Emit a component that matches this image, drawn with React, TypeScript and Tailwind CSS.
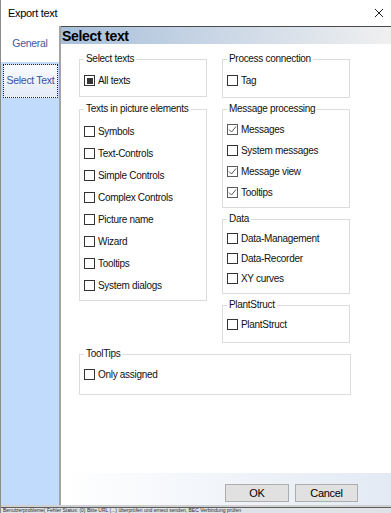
import type { ReactNode } from 'react'

type Item = { label: string; checked?: boolean; mixed?: boolean }

function Box({ checked, mixed }: { checked?: boolean; mixed?: boolean }) {
  return (
    <span
      className={`w-[11px] h-[11px] shrink-0 border bg-white flex items-center justify-center ${
        checked ? 'border-[#5c5c5c]' : 'border-[#333333]'
      }`}
    >
      {mixed && <span className="w-[6px] h-[6px] bg-[#333333]" />}
      {checked && (
        <svg width="9" height="9" viewBox="0 0 9 9">
          <polyline points="1,4.5 3.5,7 8,1.5" fill="none" stroke="#555" strokeWidth="1" />
        </svg>
      )}
    </span>
  )
}

function Group({
  title,
  items,
  rowH,
  pt,
  h,
  w,
}: {
  title: string
  items: Item[]
  rowH: string
  pt: string
  h: string
  w?: string
}) {
  return (
    <fieldset className={`border border-[#dcdcdc] px-[4px] ${h} ${w ?? 'w-[128px]'}`}>
      <legend className="ml-0 px-[2px] leading-[12px]">{title}</legend>
      <div className={`flex flex-col ${pt}`}>
        {items.map((it) => (
          <div key={it.label} className={`flex items-center gap-[3px] ${rowH}`}>
            <Box checked={it.checked} mixed={it.mixed} />
            <span>{it.label}</span>
          </div>
        ))}
      </div>
    </fieldset>
  )
}

function Btn({ children, w }: { children: ReactNode; w: string }) {
  return (
    <button className={`${w} h-[18px] bg-[#e1e1e1] border border-[#adadad] text-[11px] leading-none text-black`}>
      {children}
    </button>
  )
}

export default function App() {
  return (
    <div className="w-[391px] h-[513px] flex flex-col bg-white border-l border-[#8c8c8c] overflow-hidden text-[10px] tracking-[-0.3px] text-[#111] font-['Liberation_Sans',Arial,sans-serif]">
      {/* title bar */}
      <div className="h-[26px] shrink-0 flex items-center justify-between pl-[7px] pr-[7px]">
        <span className="text-[11px] text-black">Export text</span>
        <svg width="10" height="10" viewBox="0 0 10 10">
          <path d="M1 1 L9 9 M9 1 L1 9" stroke="#222" strokeWidth="1" />
        </svg>
      </div>

      <div className="flex-1 flex min-h-0">
        {/* tab strip */}
        <div className="w-[58px] shrink-0 flex flex-col bg-[#c0dbfb]">
          <div className="h-[36px] bg-white flex items-center justify-center text-[#3d5d98] text-[10.5px]">
            General
          </div>
          <div className="h-[2px]" />
          <div className="h-[34px] ml-[2px] mr-px border border-dotted border-[#222] bg-gradient-to-b from-[#f9fbfe] to-[#e3ebf7] flex items-center justify-center text-[#33549a] text-[10.5px]">
            Select Text
          </div>
        </div>
        <div className="w-[2px] shrink-0 bg-[#a3a3a3]" />

        {/* page */}
        <div className="flex-1 flex flex-col min-w-0">
          <div className="h-[18px] shrink-0 border-t border-[#4a4a4a] bg-gradient-to-r from-[#a8bfdb] to-[#f0f0f0] flex items-center pl-px">
            <span className="text-[14px] font-bold text-black leading-none">Select text</span>
          </div>

          <div className="flex-1 pt-[9px] pl-[18px]">
            <div className="flex gap-x-[15px] items-start">
              <div className="flex flex-col gap-[6px]">
                <Group title="Select texts" items={[{ label: 'All texts', mixed: true }]} rowH="h-[21px]" pt="pt-[5px]" h="h-[44px]" />
                <Group
                  title="Texts in picture elements"
                  items={[
                    { label: 'Symbols' },
                    { label: 'Text-Controls' },
                    { label: 'Simple Controls' },
                    { label: 'Complex Controls' },
                    { label: 'Picture name' },
                    { label: 'Wizard' },
                    { label: 'Tooltips' },
                    { label: 'System dialogs' },
                  ]}
                  rowH="h-[22px]"
                  pt="pt-[5px]"
                  h="h-[198px]"
                />
              </div>
              <div className="flex flex-col gap-[5px]">
                <Group title="Process connection" items={[{ label: 'Tag' }]} rowH="h-[21px]" pt="pt-[5px]" h="h-[45px]" />
                <Group
                  title="Message processing"
                  items={[
                    { label: 'Messages', checked: true },
                    { label: 'System messages' },
                    { label: 'Message view', checked: true },
                    { label: 'Tooltips', checked: true },
                  ]}
                  rowH="h-[21px]"
                  pt="pt-[4px]"
                  h="h-[105px]"
                />
                <Group
                  title="Data"
                  items={[{ label: 'Data-Management' }, { label: 'Data-Recorder' }, { label: 'XY curves' }]}
                  rowH="h-[20px]"
                  pt="pt-[3px]"
                  h="h-[81px]"
                />
                <Group title="PlantStruct" items={[{ label: 'PlantStruct' }]} rowH="h-[21px]" pt="pt-[3px]" h="h-[44px]" />
              </div>
            </div>
            <div className="mt-[5px]">
              <Group title="ToolTips" items={[{ label: 'Only assigned' }]} rowH="h-[21px]" pt="pt-[4px]" h="h-[47px]" w="w-[272px]" />
            </div>
          </div>

          <div className="h-[32px] shrink-0 bg-gradient-to-r from-white to-[#e3eaf4] flex items-start justify-end pt-[11px] pr-[33px] gap-[6px]">
            <Btn w="w-[64px]">OK</Btn>
            <Btn w="w-[63px]">Cancel</Btn>
          </div>
        </div>
      </div>

      {/* desktop behind the dialog */}
      <div className="h-[8px] shrink-0 flex flex-col bg-[#dfe3e8]">
        <div className="h-[2px] bg-[#d0d0d0]" />
        <div className="h-px bg-[#5e5e5e]" />
        <div className="flex-1 flex items-center overflow-hidden">
          <span className="text-[5px] leading-[5px] tracking-normal text-[#2a2a2a] whitespace-nowrap pl-[2px]">
            Benutzerprobleme( Fehler Status: (0) Bitte URL (...) überprüfen und erneut senden, BEC Verbindung prüfen
          </span>
        </div>
      </div>
    </div>
  )
}
